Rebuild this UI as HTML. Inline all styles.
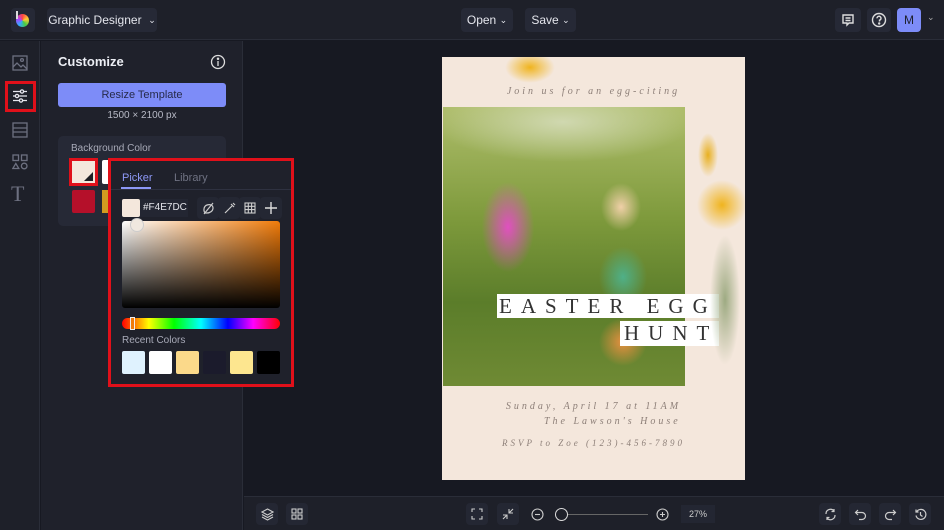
<!DOCTYPE html>
<html><head><meta charset="utf-8"><style>
*{box-sizing:border-box;margin:0;padding:0}
body{width:944px;height:530px;overflow:hidden;background:#171922;font-family:"Liberation Sans",sans-serif;position:relative;color:#e6e7ee}
.abs{position:absolute}
.btn{position:absolute;background:#262936;border-radius:4px;color:#e4e5ec;font-size:12px;display:flex;align-items:center;justify-content:center;white-space:nowrap}
.ib{position:absolute;width:22px;height:22px;background:#242733;border-radius:4px;display:flex;align-items:center;justify-content:center}
svg{display:block}
.serif{font-family:"Liberation Serif",serif;font-style:italic;color:#8d7f78;letter-spacing:3px;font-size:10px;text-align:center;white-space:nowrap}
</style></head><body>
<div class="abs" style="left:0;top:0;width:944px;height:40px;background:#1e2029;border-bottom:1px solid #2a2d38"></div>
<div class="abs" style="left:11px;top:8px;width:24px;height:24px;background:#262936;border-radius:4px"></div>
<div class="abs" style="left:16px;top:14px;width:13px;height:13px;border-radius:50%;background:conic-gradient(#f44,#fc3,#4c4,#3af,#a4f,#f44)"></div>
<div class="abs" style="left:16px;top:11px;width:2px;height:8px;background:#ddd"></div>
<div class="btn" style="left:47px;top:8px;width:110px;height:24px">Graphic Designer&nbsp;&nbsp;<span style="font-size:9px">⌄</span></div>
<div class="btn" style="left:461px;top:8px;width:52px;height:24px">Open&nbsp;<span style="font-size:9px">⌄</span></div>
<div class="btn" style="left:525px;top:8px;width:51px;height:24px">Save&nbsp;<span style="font-size:9px">⌄</span></div>
<div class="btn" style="left:835px;top:8px;width:26px;height:24px"><svg width="14" height="14" viewBox="0 0 14 14" fill="none" stroke="#ddd" stroke-width="1.4"><path d="M2 2h10v8H8l-2 2v-2H2z"/><path d="M4.5 5h5M4.5 7.5h5"/></svg></div>
<div class="btn" style="left:867px;top:8px;width:24px;height:24px"><svg width="16" height="16" viewBox="0 0 16 16" fill="none" stroke="#ddd" stroke-width="1.4"><circle cx="8" cy="8" r="6.5"/><path d="M6 6.3a2 2 0 1 1 2.5 1.9V9.5"/><circle cx="8.2" cy="11.5" r=".5" fill="#ddd"/></svg></div>
<div class="btn" style="left:897px;top:8px;width:24px;height:24px;background:#7d8cf8;color:#1d1f2a;font-size:12px">M</div>
<div class="abs" style="left:927px;top:12px;font-size:9px;color:#aaa">⌄</div>
<div class="abs" style="left:0;top:41px;width:40px;height:489px;background:#1e2029;border-right:1px solid #2a2d38"></div>
<svg class="abs" style="left:12px;top:55px" width="16" height="16" viewBox="0 0 16 16" fill="none" stroke="#6d7080" stroke-width="1.3"><rect x="1" y="1" width="14" height="14"/><path d="M1 12l4-4 4 4 2-2 4 4"/><circle cx="10" cy="5" r="1.4"/></svg>
<div class="abs" style="left:5px;top:81px;width:31px;height:31px;border:3px solid #e0101a"></div>
<svg class="abs" style="left:12px;top:88px" width="16" height="16" viewBox="0 0 16 16" fill="none" stroke="#e6e6ee" stroke-width="1.3"><path d="M1 3.5h14M1 8h14M1 12.5h14"/><circle cx="10" cy="3.5" r="1.6" fill="#1e2029"/><circle cx="5" cy="8" r="1.6" fill="#1e2029"/><circle cx="9" cy="12.5" r="1.6" fill="#1e2029"/></svg>
<svg class="abs" style="left:12px;top:122px" width="16" height="16" viewBox="0 0 16 16" fill="none" stroke="#6d7080" stroke-width="1.3"><rect x="1" y="1" width="14" height="14"/><path d="M1 6h14M1 10h14"/></svg>
<svg class="abs" style="left:12px;top:154px" width="16" height="16" viewBox="0 0 16 16" fill="none" stroke="#6d7080" stroke-width="1.3"><rect x="1" y="1" width="5.5" height="5.5"/><rect x="9.5" y="1" width="5.5" height="5.5"/><path d="M3.8 9.5l3 5h-6z"/><circle cx="12.2" cy="12" r="2.8"/></svg>
<div class="abs" style="left:11px;top:181px;font-family:'Liberation Serif',serif;font-size:22px;color:#6d7080">T</div>
<div class="abs" style="left:41px;top:41px;width:202px;height:489px;background:#1f212b;border-right:1px solid #2a2d38"></div>
<div class="abs" style="left:58px;top:54px;font-size:13px;font-weight:bold;color:#eceef4">Customize</div>
<svg class="abs" style="left:210px;top:54px" width="16" height="16" viewBox="0 0 16 16" fill="none" stroke="#ddd" stroke-width="1.3"><circle cx="8" cy="8" r="6.5"/><path d="M8 7v5"/><circle cx="8" cy="4.7" r=".6" fill="#ddd"/></svg>
<div class="abs" style="left:58px;top:83px;width:168px;height:24px;background:#7d8cf8;border-radius:3px;color:#262a4a;font-size:11px;display:flex;align-items:center;justify-content:center">Resize Template</div>
<div class="abs" style="left:58px;top:110px;width:168px;text-align:center;font-size:10px;color:#b8bac6">1500 × 2100 px</div>
<div class="abs" style="left:58px;top:136px;width:168px;height:90px;background:#262936;border-radius:5px"></div>
<div class="abs" style="left:71px;top:143px;font-size:10px;color:#a8aab8">Background Color</div>
<div class="abs" style="left:69px;top:158px;width:29px;height:28px;border:3px solid #e0101a;background:#f4e7dc"></div>
<div class="abs" style="left:84px;top:172px;width:0;height:0;border-left:9px solid transparent;border-bottom:9px solid #1e1e24"></div>
<div class="abs" style="left:102px;top:160px;width:8px;height:24px;background:#fff;border-radius:2px 0 0 2px"></div>
<div class="abs" style="left:72px;top:190px;width:23px;height:23px;background:#b5102a;border-radius:2px"></div>
<div class="abs" style="left:102px;top:190px;width:8px;height:23px;background:#d29b20"></div>
<div class="abs" style="left:108px;top:158px;width:186px;height:229px;background:#1f212b;border:3px solid #e0101a"></div>
<div class="abs" style="left:122px;top:172px;font-size:11px;color:#8d98f6">Picker</div>
<div class="abs" style="left:121px;top:187px;width:30px;height:2px;background:#8d98f6"></div>
<div class="abs" style="left:174px;top:172px;font-size:11px;color:#6f7282">Library</div>
<div class="abs" style="left:111px;top:189px;width:180px;height:1px;background:#2e3140"></div>
<div class="abs" style="left:122px;top:199px;width:18px;height:18px;background:#f4e7dc;border-radius:2px"></div>
<div class="abs" style="left:140px;top:199px;width:48px;height:18px;background:#232632;font-size:10px;color:#e3e4ea;line-height:18px;padding-left:3px">#F4E7DC</div>
<div class="ib" style="left:197px;top:197px"><svg width="13" height="13" viewBox="0 0 13 13" fill="none" stroke="#ccc" stroke-width="1.2"><path d="M3 11C1 8 2 4 5 3s6 0 6 3-3 5-6 5zM2 12L11 1"/></svg></div>
<div class="ib" style="left:218px;top:197px"><svg width="13" height="13" viewBox="0 0 13 13" fill="none" stroke="#ccc" stroke-width="1.2"><path d="M2 11l7-7M8 2l3 3M10 1l2 2"/></svg></div>
<div class="ib" style="left:239px;top:197px"><svg width="12" height="12" viewBox="0 0 12 12" fill="none" stroke="#ccc" stroke-width="1.1"><rect x="1" y="1" width="10" height="10"/><path d="M4.3 1v10M7.6 1v10M1 4.3h10M1 7.6h10"/></svg></div>
<div class="ib" style="left:260px;top:197px"><svg width="12" height="12" viewBox="0 0 12 12" stroke="#ddd" stroke-width="1.4"><path d="M6 0v12M0 6h12"/></svg></div>
<div class="abs" style="left:122px;top:221px;width:158px;height:87px;border-radius:3px;background:linear-gradient(to bottom,rgba(0,0,0,0),#000),linear-gradient(to right,#fff,#f07b0a)"></div>
<div class="abs" style="left:130px;top:218px;width:14px;height:14px;border-radius:50%;background:#f0e8df;border:1px solid #ccc"></div>
<div class="abs" style="left:122px;top:318px;width:158px;height:11px;border-radius:6px;background:linear-gradient(to right,#f00,#ff0 17%,#0f0 33%,#0ff 50%,#00f 67%,#f0f 83%,#f00)"></div>
<div class="abs" style="left:130px;top:317px;width:5px;height:13px;border:1px solid #eee;background:#f07b0a"></div>
<div class="abs" style="left:122px;top:335px;font-size:10px;color:#a8aab8">Recent Colors</div>
<div class="abs" style="left:122px;top:351px;width:23px;height:23px;background:#dff2fe;border-radius:2px"></div>
<div class="abs" style="left:149px;top:351px;width:23px;height:23px;background:#fff;border-radius:2px"></div>
<div class="abs" style="left:176px;top:351px;width:23px;height:23px;background:#fbd98a;border-radius:2px"></div>
<div class="abs" style="left:203px;top:351px;width:23px;height:23px;background:#1b1b2c;border-radius:2px"></div>
<div class="abs" style="left:230px;top:351px;width:23px;height:23px;background:#fde68f;border-radius:2px"></div>
<div class="abs" style="left:257px;top:351px;width:23px;height:23px;background:#000;border-radius:2px"></div>
<div class="abs" style="left:442px;top:57px;width:303px;height:423px;background:#f4e7dc"></div>
<div class="abs" style="left:443px;top:107px;width:242px;height:279px;background:
radial-gradient(ellipse 35px 60px at 65px 120px,#e050c0,transparent 75%),
radial-gradient(ellipse 30px 38px at 180px 170px,#4fb088,transparent 80%),
radial-gradient(ellipse 25px 30px at 178px 100px,#f0d0a8,transparent 80%),
radial-gradient(ellipse 30px 30px at 180px 235px,#e89040,transparent 80%),
radial-gradient(ellipse 130px 40px at 120px 15px,#d0d8b0,transparent),
linear-gradient(#aebd6a,#7e9a3c 40%,#5b7d2a 70%,#6f8a34)"></div>
<div class="abs" style="left:497px;top:294px;width:222px;height:24px;background:#fff;font-family:'Liberation Serif',serif;font-size:21px;letter-spacing:9px;color:#333;line-height:24px;padding-left:2px;white-space:nowrap">EASTER EGG</div>
<div class="abs" style="left:620px;top:321px;width:99px;height:25px;background:#fff;font-family:'Liberation Serif',serif;font-size:21px;letter-spacing:9px;color:#333;line-height:25px;padding-left:4px">HUNT</div>
<div class="abs" style="left:505px;top:57px;width:50px;height:26px;background:radial-gradient(ellipse at 50% 40%,#f0b41e,transparent 70%)"></div>
<div class="abs" style="left:690px;top:130px;width:55px;height:110px;background:radial-gradient(ellipse 25px 25px at 32px 75px,#f0b41e,transparent),radial-gradient(ellipse 10px 22px at 18px 25px,#e8b020,transparent)"></div>
<div class="abs" style="left:700px;top:230px;width:45px;height:140px;background:radial-gradient(ellipse 15px 65px at 25px 70px,rgba(100,130,70,.6),transparent)"></div>
<div class="abs serif" style="left:442px;top:86px;width:303px">Join us for an egg-citing</div>
<div class="abs serif" style="left:442px;top:401px;width:303px">Sunday, April 17 at 11AM</div>
<div class="abs serif" style="left:476px;top:416px;width:303px;text-align:left;padding-left:68px">The Lawson's House</div>
<div class="abs serif" style="left:442px;top:438px;width:303px;font-size:9px">RSVP to Zoe (123)-456-7890</div>
<div class="abs" style="left:244px;top:496px;width:700px;height:34px;background:#1e2029;border-top:1px solid #2a2d38"></div>
<div class="ib" style="left:256px;top:503px"><svg width="13" height="13" viewBox="0 0 13 13" fill="none" stroke="#ccc" stroke-width="1.1"><path d="M6.5 1L12 4 6.5 7 1 4zM1 6.5l5.5 3 5.5-3M1 9l5.5 3L12 9"/></svg></div>
<div class="ib" style="left:286px;top:503px"><svg width="12" height="12" viewBox="0 0 12 12" fill="none" stroke="#ccc" stroke-width="1.1"><rect x="1" y="1" width="4" height="4"/><rect x="7" y="1" width="4" height="4"/><rect x="1" y="7" width="4" height="4"/><rect x="7" y="7" width="4" height="4"/></svg></div>
<div class="ib" style="left:466px;top:503px"><svg width="12" height="12" viewBox="0 0 12 12" fill="none" stroke="#ccc" stroke-width="1.1"><path d="M1 4V1h3M8 1h3v3M11 8v3H8M4 11H1V8"/></svg></div>
<div class="ib" style="left:497px;top:503px"><svg width="12" height="12" viewBox="0 0 12 12" fill="none" stroke="#ccc" stroke-width="1.1"><path d="M7 1v4h4M7 5l4-4M5 11V7H1M5 7l-4 4"/></svg></div>
<svg class="abs" style="left:531px;top:508px" width="13" height="13" viewBox="0 0 13 13" fill="none" stroke="#ccc" stroke-width="1.1"><circle cx="6.5" cy="6.5" r="5.5"/><path d="M4 6.5h5"/></svg>
<div class="abs" style="left:560px;top:514px;width:88px;height:1px;background:#666"></div>
<div class="abs" style="left:555px;top:508px;width:13px;height:13px;border-radius:50%;border:1.5px solid #ddd;background:#1e2029"></div>
<svg class="abs" style="left:656px;top:508px" width="13" height="13" viewBox="0 0 13 13" fill="none" stroke="#ccc" stroke-width="1.1"><circle cx="6.5" cy="6.5" r="5.5"/><path d="M4 6.5h5M6.5 4v5"/></svg>
<div class="abs" style="left:681px;top:505px;width:34px;height:18px;background:#232632;font-size:9px;color:#ccc;text-align:center;line-height:18px">27%</div>
<div class="ib" style="left:819px;top:503px"><svg width="13" height="13" viewBox="0 0 13 13" fill="none" stroke="#ccc" stroke-width="1.2"><path d="M2 6a4.5 4.5 0 0 1 8-3M11 7a4.5 4.5 0 0 1-8 3M10 1v2.5H7.5M3 12V9.5h2.5"/></svg></div>
<div class="ib" style="left:849px;top:503px"><svg width="13" height="13" viewBox="0 0 13 13" fill="none" stroke="#ccc" stroke-width="1.2"><path d="M4 2L1.5 4.5 4 7M1.5 4.5H8a3.5 3.5 0 0 1 0 7H5"/></svg></div>
<div class="ib" style="left:879px;top:503px"><svg width="13" height="13" viewBox="0 0 13 13" fill="none" stroke="#ccc" stroke-width="1.2"><path d="M9 2l2.5 2.5L9 7M11.5 4.5H5a3.5 3.5 0 0 0 0 7h3"/></svg></div>
<div class="ib" style="left:909px;top:503px"><svg width="13" height="13" viewBox="0 0 13 13" fill="none" stroke="#ccc" stroke-width="1.2"><path d="M2.5 4a5 5 0 1 1-.5 3.5M2 1.5V4h2.5M6.5 4v3l2 1.5"/></svg></div>
</body></html>
